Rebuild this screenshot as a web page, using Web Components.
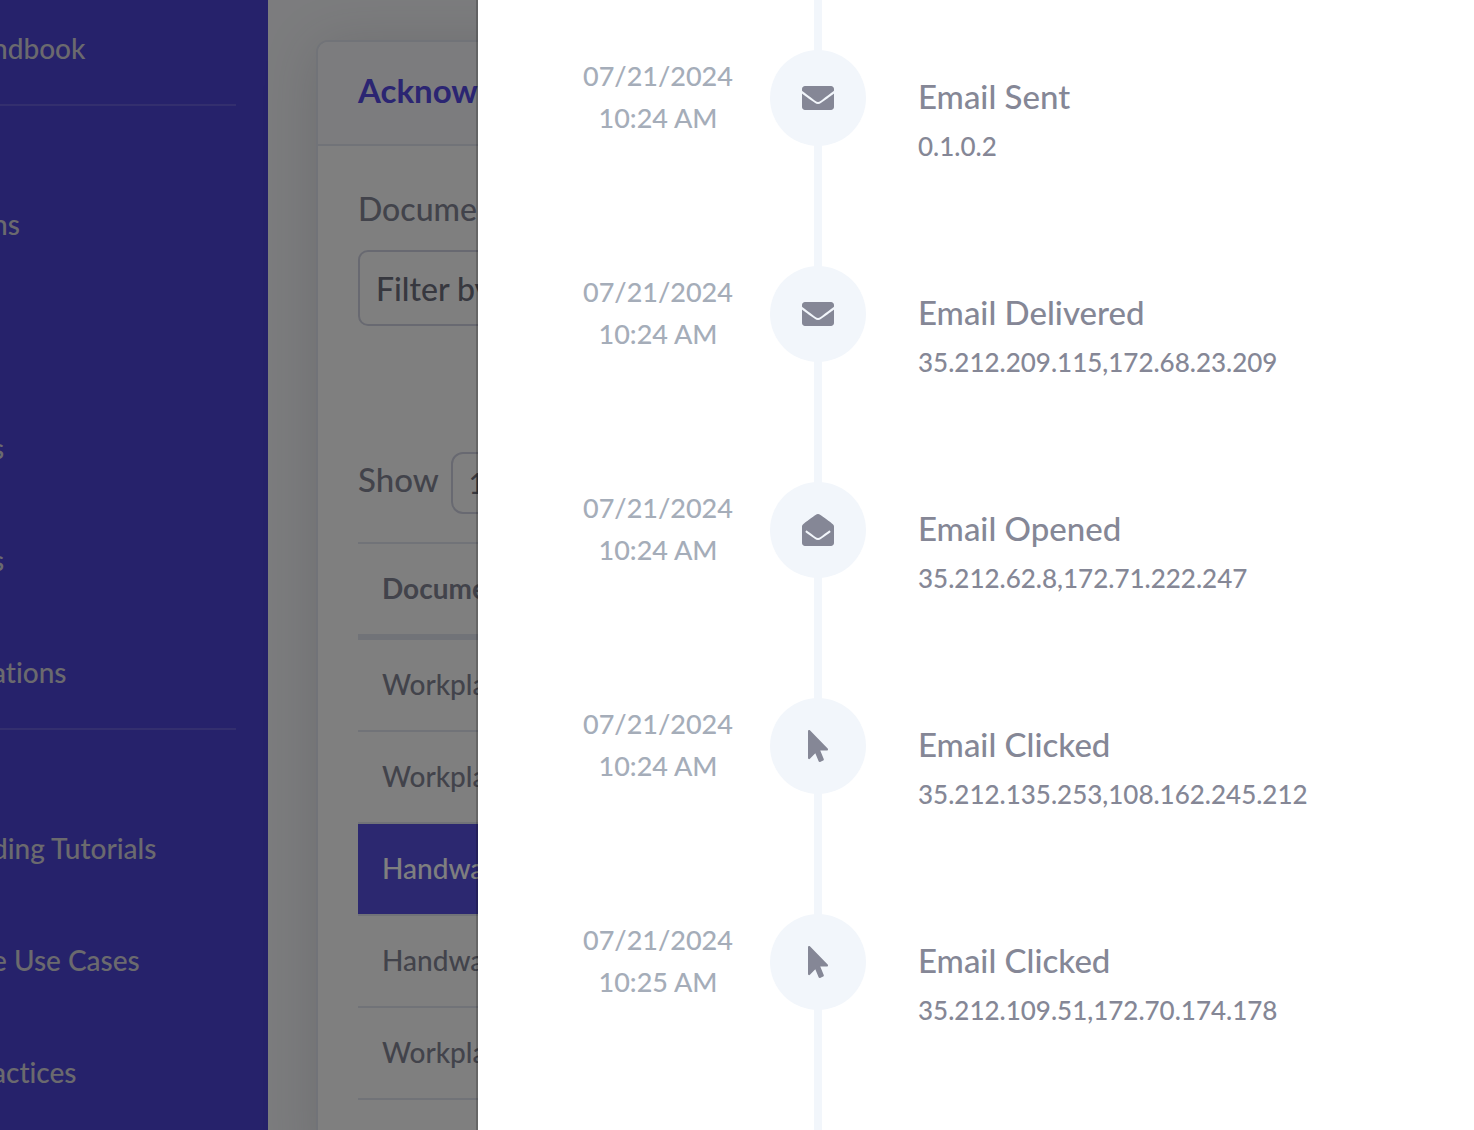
<!DOCTYPE html>
<html lang="en">
<head>
<meta charset="utf-8">
<title>Acknowledgements</title>
<style>
body{margin:0;font-family:Lato,"Open Sans",sans-serif;font-weight:500;font-variant-ligatures:none;font-size:32px;line-height:48px;color:#858796;background:#f8f9fc}
</style>
</head>
<body>
<app-shell>
  <side-nav slot="nav">
    <nav-item>ndbook</nav-item>
    <nav-divider></nav-divider>
    <nav-item>ns</nav-item>
    <nav-item></nav-item>
    <nav-item>s</nav-item>
    <nav-item>s</nav-item>
    <nav-item>ations</nav-item>
    <nav-divider></nav-divider>
    <nav-item>ding Tutorials</nav-item>
    <nav-item>e Use Cases</nav-item>
    <nav-item>actices</nav-item>
  </side-nav>
  <page-card>
    <span slot="title">Acknow</span>
    <document-filter></document-filter>
    <document-table></document-table>
  </page-card>
  <side-drawer slot="overlay">
    <time-line>
      <time-event icon="sent" date="07/21/2024" time="10:24 AM"><span slot="title">Email Sent</span>0.1.0.2</time-event>
      <time-event icon="sent" date="07/21/2024" time="10:24 AM"><span slot="title">Email Delivered</span>35.212.209.115,172.68.23.209</time-event>
      <time-event icon="opened" date="07/21/2024" time="10:24 AM"><span slot="title">Email Opened</span>35.212.62.8,172.71.222.247</time-event>
      <time-event icon="clicked" date="07/21/2024" time="10:24 AM"><span slot="title">Email Clicked</span>35.212.135.253,108.162.245.212</time-event>
      <time-event icon="clicked" date="07/21/2024" time="10:25 AM"><span slot="title">Email Clicked</span>35.212.109.51,172.70.174.178</time-event>
    </time-line>
  </side-drawer>
</app-shell>
<script>
function define(name, html, setup){
  customElements.define(name, class extends HTMLElement{
    constructor(){
      super();
      this.attachShadow({mode:"open"}).innerHTML = html;
    }
    connectedCallback(){ if(setup) setup(this, this.shadowRoot); }
  });
}

define("app-shell", `
<style>
:host{display:flex;height:100vh;overflow:hidden}
main{flex:1;min-width:0;padding:40px 48px 0}
</style>
<slot name="nav"></slot>
<main><slot></slot></main>
<slot name="overlay"></slot>`);

define("side-nav", `
<style>
:host{display:block;flex:0 0 268px;overflow:hidden;background:#4c44d6}
nav{margin-top:-8px}
</style>
<nav aria-label="Main"><slot></slot></nav>`);

define("nav-item", `
<style>
:host{display:block}
a{display:flex;align-items:center;height:112px;margin-left:-8px;font-size:28px;color:#d6d4dc;text-decoration:none;white-space:nowrap}
</style>
<a href="#"><slot></slot></a>`);

define("nav-divider", `
<style>
:host{display:block;padding-bottom:62px}
hr{margin:0 32px 0 0;border:0;height:2px;background:rgba(255,255,255,.15)}
</style>
<hr>`);

define("page-card", `
<style>
:host{display:block;box-sizing:border-box;height:100vh;border:2px solid #e3e6f0;border-radius:12px;background:#fff;box-shadow:0 5px 56px rgba(58,59,69,.15)}
header{padding:23px 40px 29px;background:#f8f9fc;border-bottom:2px solid #e3e6f0;border-radius:10px 10px 0 0}
h2{margin:0;font-size:33px;line-height:50px;font-weight:700;color:#564be4}
section{padding:39px 40px}
</style>
<header><h2><slot name="title"></slot></h2></header>
<section><slot></slot></section>`);

define("document-filter", `
<style>
:host{display:block}
label{display:block;margin-bottom:17px}
select{display:block;appearance:none;box-sizing:border-box;width:100%;height:76px;padding:2px 16px 0;border:2px solid #d1d3e2;border-radius:10px;background:#fff;font:inherit;color:#6e707e}
.length{display:flex;align-items:center;gap:12px;height:62px;margin-top:126px}
.length label{margin:0;font-size:33px;line-height:54px;align-self:start}
.length select{width:140px;height:62px;padding-top:0;font-size:28px;border-radius:12px}
</style>
<label for="doc">Docume</label>
<select id="doc"><option>Filter by</option></select>
<div class="length"><label for="len">Show</label><select id="len"><option>10</option></select></div>`);

define("document-table", `
<style>
:host{display:block;margin-top:28px;font-size:28px;line-height:42px}
table{width:100%;border-spacing:0;border-top:2px solid #e3e6f0}
th,td{height:42px;padding:23px 24px 25px;text-align:left;border-bottom:2px solid #e3e6f0}
th{border-bottom-width:6px;font-weight:700}
.selected td{background:#5850e0;background-clip:padding-box;color:#fff}
</style>
<table>
<thead><tr><th>Docume</th></tr></thead>
<tbody>
<tr><td>Workpla</td></tr>
<tr><td>Workpla</td></tr>
<tr class="selected"><td>Handwa</td></tr>
<tr><td>Handwa</td></tr>
<tr><td>Workpla</td></tr>
<tr><td></td></tr>
</tbody>
</table>`);

define("side-drawer", `
<style>
:host{display:flex;position:fixed;inset:0;background:rgba(0,0,0,.5)}
aside{flex:1;margin-left:476px;border-left:2px solid rgba(0,0,0,.2);background:#fff;background-clip:padding-box;overflow:hidden}
</style>
<aside><slot></slot></aside>`);

define("time-line", `
<style>
:host{display:block;min-height:100vh;margin-top:-10px;padding:0 40px 10px 80px;background:linear-gradient(#f2f6fb,#f2f6fb) 336px 0/8px 100% no-repeat}
</style>
<slot></slot>`);

const icons = {
  sent:{w:512,d:"M502.3 190.8c3.9-3.1 9.7-.2 9.7 4.7V400c0 26.5-21.5 48-48 48H48c-26.5 0-48-21.5-48-48V195.6c0-5 5.7-7.8 9.7-4.7 22.4 17.4 52.1 39.5 154.1 113.6 21.1 15.4 56.7 47.8 92.2 47.6 35.7.3 72-32.8 92.3-47.6 102-74.1 131.6-96.3 154-113.7zM256 320c23.2.4 56.6-29.2 73.4-41.4 132.7-96.3 142.8-104.7 173.4-128.7 5.8-4.5 9.2-11.5 9.2-18.9v-19c0-26.5-21.5-48-48-48H48c-26.5 0-48 21.5-48 48v19c0 7.4 3.4 14.3 9.2 18.9 30.6 23.9 40.7 32.4 173.4 128.7 16.8 12.2 50.2 41.8 73.4 41.4z"},
  opened:{w:512,d:"M512 464c0 26.51-21.49 48-48 48H48c-26.51 0-48-21.49-48-48V200.724a48 48 0 0 1 18.387-37.776c24.913-19.529 45.501-35.365 164.2-121.511C199.412 29.17 232.797-.347 256 .003c23.198-.354 56.596 29.172 73.413 41.433 118.687 86.137 139.303 101.995 164.2 121.512A48 48 0 0 1 512 200.724V464zm-65.666-196.605c-2.563-3.728-7.7-4.595-11.339-1.907-22.845 16.873-55.462 40.705-105.582 77.079-16.825 12.266-50.21 41.781-73.413 41.43-23.211.344-56.559-29.143-73.413-41.43-50.114-36.37-82.734-60.204-105.582-77.079-3.639-2.688-8.776-1.821-11.339 1.907l-9.072 13.196a7.998 7.998 0 0 0 1.839 10.967c22.887 16.899 55.454 40.69 105.303 76.868 20.274 14.781 56.524 47.813 92.264 47.573 35.724.242 71.961-32.771 92.263-47.573 49.85-36.179 82.418-59.97 105.303-76.868a7.998 7.998 0 0 0 1.839-10.967l-9.071-13.196z"},
  clicked:{w:320,d:"M302.189 329.126H196.105l55.831 135.993c3.889 9.428-.555 19.999-9.444 23.999l-49.165 21.427c-9.165 4-19.443-.571-23.332-9.714l-53.053-129.136-86.664 89.138C18.729 472.71 0 463.554 0 447.977V18.299C0 1.899 19.921-6.096 30.277 5.443l284.412 292.542c11.472 11.179 3.007 31.141-12.5 31.141z"}
};

define("time-event", `
<style>
:host{display:grid;grid-template-columns:200px 96px 1fr;column-gap:12px;height:216px}
time{align-self:center;margin-bottom:2px;text-align:center;font-size:27px;line-height:42px;color:#a5adb9}
time span{display:block}
.dot{align-self:center;display:flex;align-items:center;justify-content:center;height:96px;border-radius:50%;background:#f2f6fb}
svg{height:32px;fill:#858796}
.body{padding:81px 0 0 40px;line-height:50px}
h3{margin:0;font-size:33px;font-weight:500}
p{margin:0;font-size:26px}
</style>
<time><span id="date"></span><span id="time"></span></time>
<div class="dot"><svg aria-hidden="true"><path/></svg></div>
<div class="body"><h3><slot name="title"></slot></h3><p><slot></slot></p></div>`,
(host, root) => {
  const icon = icons[host.getAttribute("icon")];
  root.getElementById("date").textContent = host.getAttribute("date");
  root.getElementById("time").textContent = host.getAttribute("time");
  const svg = root.querySelector("svg");
  svg.setAttribute("viewBox", "0 0 " + icon.w + " 512");
  svg.setAttribute("width", icon.w / 16);
  root.querySelector("path").setAttribute("d", icon.d);
});
</script>
</body>
</html>
